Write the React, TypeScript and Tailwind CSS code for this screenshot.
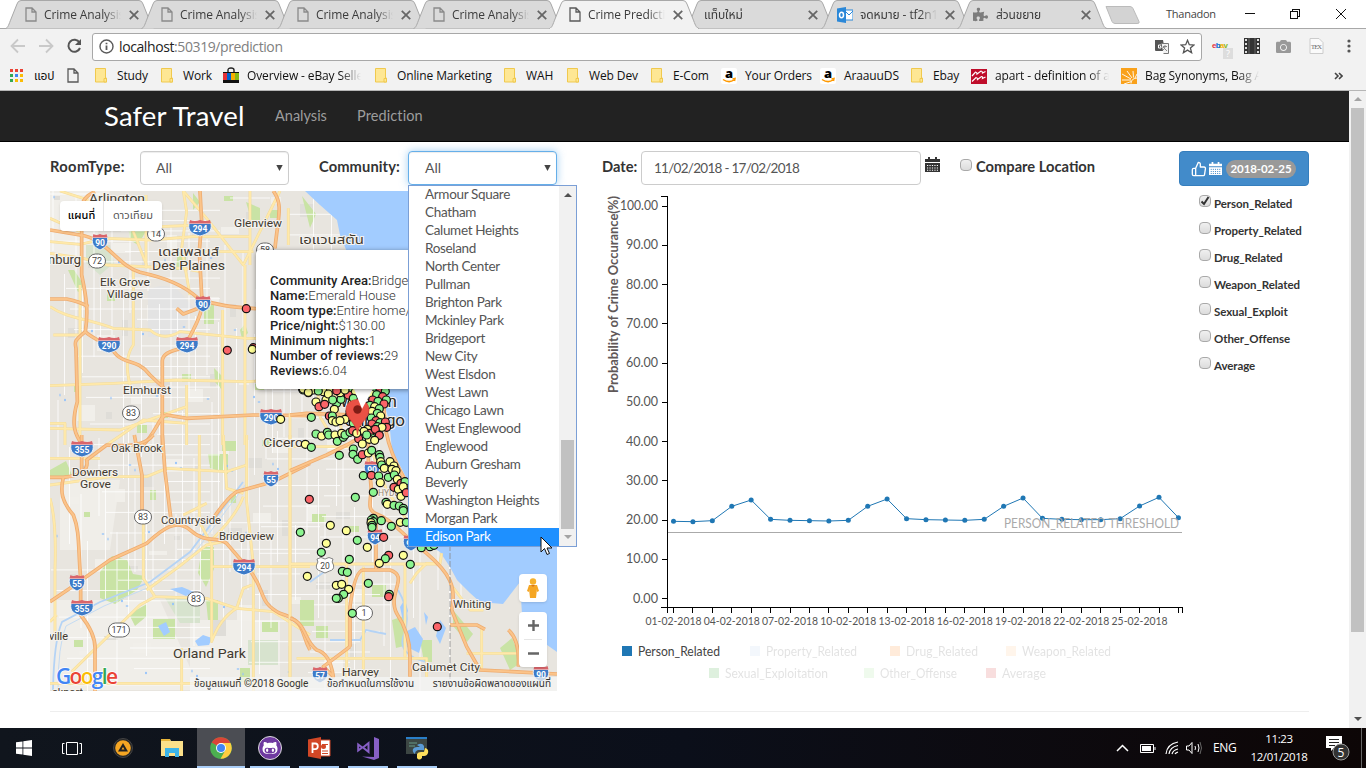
import React from "react";
import { FaPuzzlePiece, FaCamera, FaGithubAlt } from "react-icons/fa";
import { FiThumbsUp } from "react-icons/fi";

const UI = "font-['Open_Sans','Noto_Sans_Thai','Noto_Sans',sans-serif]";
const BODY = "font-['Lato','Open_Sans',sans-serif]";

/* ---------- small icons ---------- */
const PageIcon = ({ dim = false }: { dim?: boolean }) => (
  <svg width="12" height="15" viewBox="0 0 12 15" fill="none" stroke={dim ? "#8a8a8a" : "#5a5a5a"} strokeWidth="1.3">
    <path d="M1 1h6l4 4v9H1zM7 1v4h4" />
  </svg>
);
const Folder = () => (
  <svg width="13" height="15" viewBox="0 0 13 15">
    <path d="M.5.5h10v9.500h1v4H.5z" fill="#fee794" stroke="#f0c94e" />
    <path d="M9 14v-3.500h2.500V14z" fill="#fee794" stroke="#f0c94e" />
  </svg>
);
const Amazon = () => (
  <svg width="16" height="16" viewBox="0 0 16 16">
    <rect width="16" height="16" rx="2" fill="#fff" />
    <text x="8" y="10" textAnchor="middle" fontFamily="Open Sans" fontWeight="800" fontSize="13">a</text>
    <path d="M2 11.500q6 4 11 .5M11.500 11l2.500-.5-.5 2.500" fill="none" stroke="#ff9900" strokeWidth="1.500" />
  </svg>
);

/* ---------- browser tabs ---------- */
type TabInfo = { t: string; kind: string };
const tabs: TabInfo[] = [
  { t: "Crime Analysis", kind: "page" },
  { t: "Crime Analysis", kind: "page" },
  { t: "Crime Analysis", kind: "page" },
  { t: "Crime Analysis", kind: "page" },
  { t: "Crime Predictio", kind: "active" },
  { t: "แท็บใหม่", kind: "none" },
  { t: "จดหมาย - tf2n1", kind: "outlook" },
  { t: "ส่วนขยาย", kind: "puzzle" },
];
const Tab = ({ t, kind }: TabInfo) => {
  const active = kind === "active";
  return (
    <div className={active ? "relative z-10 h-[29px] w-[136px] shrink-0" : "relative h-[29px] w-[136px] shrink-0"}>
      <svg className="absolute left-0 top-0 overflow-visible" width="150" height="29" viewBox="0 0 150 29">
        <path d="M.5 28.500C3 28 4 24 6 19L12 4Q13 .5 16 .5H134Q137 .5 138 4L144 19C146 24 147 28 150 28.500" fill={active ? "#f2f2f2" : "#dadada"} stroke="#a8a8a8" />
        {active && <path d="M1 29H149" stroke="#f2f2f2" strokeWidth="2" />}
      </svg>
      <div className="relative flex h-full items-center pl-5">
        {kind !== "none" && (
          <span className="flex w-[19px] shrink-0">
            {(kind === "page" || active) && <PageIcon dim={!active} />}
            {kind === "puzzle" && <FaPuzzlePiece size={15} color="#7d7d7d" className="-ml-1 shrink-0" />}
            {kind === "outlook" && (
              <svg width="16" height="16" viewBox="0 0 16 16" className="-ml-1 shrink-0">
                <path d="M8 3h8v10H8z" fill="#fff" stroke="#2b88d8" />
                <path d="m8 4 4 4 4-4" fill="none" stroke="#2b88d8" />
                <path d="M0 1.500 9 0v16l-9-1.500z" fill="#2b88d8" />
                <ellipse cx="4.500" cy="8" rx="2" ry="2.700" fill="none" stroke="#fff" strokeWidth="1.500" />
              </svg>
            )}
          </span>
        )}
        <span className={(kind === "none" ? "-ml-[1px] w-[96px]" : "w-[77px]") + " overflow-hidden whitespace-nowrap text-[12px] leading-5 tracking-[-0.1px] text-[#3c3c3c] [mask-image:linear-gradient(to_right,black_78%,transparent)]"}>{t}</span>
        <svg className="ml-2 shrink-0" width="10" height="10" viewBox="0 0 9 9" stroke="#666" strokeWidth="1.600"><path d="m.7.7 7.600 7.600M8.300.7.700 8.300" /></svg>
      </div>
    </div>
  );
};

const EbayBag = () => (
  <svg width="16" height="16" viewBox="0 0 16 16" className="-mt-px">
    <path d="M5 5V3q0-2 3-2t3 2v2" fill="none" stroke="#222" strokeWidth="1.400" />
    <path d="M0 5h16v11H0z" fill="#111" />
    <path d="M0 6h4v7H0z" fill="#e53238" /><path d="M4 6h4v7H4z" fill="#0064d2" /><path d="M8 6h4v7H8z" fill="#f5af02" /><path d="M12 6h4v7h-4z" fill="#86b817" />
  </svg>
);
const AppsIcon = () => (
  <svg width="13" height="13" viewBox="0 0 13 13">
    {["#ea4335", "#ea4335", "#ea4335", "#34a853", "#4285f4", "#fbbc05", "#34a853", "#fbbc05", "#fbbc05"].map((c, i) => (
      <rect key={i} x={(i % 3) * 5} y={Math.floor(i / 3) * 5} width="3" height="3" fill={c} />
    ))}
  </svg>
);
const Macmillan = () => (
  <svg width="16" height="16" viewBox="0 0 16 16"><path d="M0 1h16v15H0z" fill="#bf0d2b" /><path d="M1 8 4.500 4q1.500 0 1.500 2L10 3q1.500 0 1.500 2l3-1.500M1 13.500 5 9.500q1.500 0 1.500 2l4-3q1.500 0 1 2l3-1.500" stroke="#fff" fill="none" strokeWidth="1.200" /></svg>
);
const Sunburst = () => (
  <svg width="16" height="16" viewBox="0 0 16 16"><path d="M0 0h16v16H0z" fill="#f9a11b" /><path d="M10 11 1 6M11 10 6 3M12.500 9.500 12 3M10 12H1M10.500 13.500 3 16M14 10l2-4M10 15.500q0-5 6-5.500" stroke="#fff" fill="none" strokeWidth=".9" /></svg>
);
const marks: { w: string; icon: React.ReactNode; g: string; t: string; fade?: boolean }[] = [
  { w: "w-[57px]", icon: <AppsIcon />, g: "w-6", t: "แอป" },
  { w: "w-7", icon: <PageIcon />, g: "w-5", t: "" },
  { w: "w-[66px]", icon: <Folder />, g: "w-[22px]", t: "Study" },
  { w: "w-[62px]", icon: <Folder />, g: "w-[22px]", t: "Work" },
  { w: "w-[152px]", icon: <EbayBag />, g: "w-6", t: "Overview - eBay Selle", fade: true },
  { w: "w-[129px]", icon: <Folder />, g: "w-[22px]", t: "Online Marketing" },
  { w: "w-[63px]", icon: <Folder />, g: "w-[22px]", t: "WAH" },
  { w: "w-[84px]", icon: <Folder />, g: "w-[22px]", t: "Web Dev" },
  { w: "w-[70px]", icon: <Folder />, g: "w-[22px]", t: "E-Com" },
  { w: "w-[99px]", icon: <Amazon />, g: "w-6", t: "Your Orders" },
  { w: "w-[91px]", icon: <Amazon />, g: "w-6", t: "AraauuDS" },
  { w: "w-[60px]", icon: <Folder />, g: "w-[22px]", t: "Ebay" },
  { w: "w-[150px]", icon: <Macmillan />, g: "w-6", t: "apart - definition of a", fade: true },
  { w: "w-[150px]", icon: <Sunburst />, g: "w-6", t: "Bag Synonyms, Bag A", fade: true },
];

const Chrome = () => (
  <header className={"h-[91px] bg-[#f2f2f2] " + UI}>
    <div className="flex h-[29px] border-b border-[#a8a8a8] bg-white pl-[5px]">
      {tabs.map((t, i) => <Tab key={i} {...t} />)}
      <svg className="ml-[12px] mt-[6px] shrink-0" width="36" height="19" viewBox="0 0 36 19"><path d="M1 .5h24q2 0 3 2l6 13q1 2-2 2H10q-2 0-3-2z" fill="#d3d3d3" stroke="#bbb" /></svg>
      <span className="ml-[25px] mt-[6px] w-[52px] text-[11px] leading-4 tracking-[-0.25px] text-[#444]">Thanadon</span>
      <svg className="ml-auto mr-[17px] mt-2" width="104" height="12" viewBox="0 0 104 12" fill="none" stroke="#111" shapeRendering="crispEdges">
        <path d="M0 5.500h10M45.500 3.500h7v7h-7zM47.500 3V1.500h7v7H53" /><path d="m91 1 10 10M101 1 91 11" shapeRendering="auto" />
      </svg>
    </div>
    <div className="flex h-8 items-center">
      <svg className="ml-[10px] mt-[2px] shrink-0" width="82" height="18" viewBox="10 38 82 18" fill="none" stroke="#c9c9c9" strokeWidth="1.800">
        <path d="M25 47H12M18 40.500 11.500 47l6.500 6.500M39 47h13M46 40.500l6.500 6.500-6.500 6.500" />
        <path d="M79.500 43.500A6 6 0 1 0 80 49" stroke="#555" strokeWidth="2" /><path d="M81 40v6h-6z" fill="#555" stroke="none" />
      </svg>
      <div className="mt-[3px] flex h-[28px] w-[1110px] shrink-0 items-center rounded-[3px] border border-[#a8a8a8] bg-white pl-[6px]">
        <svg width="15" height="15" viewBox="0 0 15 15" fill="none" stroke="#5a5a5a" strokeWidth="1.400"><circle cx="7.500" cy="7.500" r="6.500" /><path d="M7.500 6.500V11M7.500 3.700v1.600" strokeWidth="1.800" /></svg>
        <span className="ml-[5px] text-[14px] leading-5 tracking-[-0.4px] text-[#222]">localhost<span className="text-[#808080]">:50319/prediction</span></span>
        <svg className="ml-auto mr-[11px]" width="14" height="14" viewBox="0 0 14 14"><path d="M0 0h8l2 11H1Q0 11 0 10z" fill="#555" /><path d="M6.500 3.500h7v10h-5" fill="#f2f2f2" stroke="#777" /><path d="M8 6.500h4M10 5v1.500Q10 9 8 10m0-3 4 4" fill="none" stroke="#888" /><path d="M6 5H3.500v3h2.500V6.500H5" fill="none" stroke="#fff" /></svg>
        <svg className="mr-[6px]" width="15" height="15" viewBox="0 0 15 15" fill="none" stroke="#555" strokeWidth="1.300"><path d="m7.500 1.300 1.800 4.400 4.700.3-3.600 3 1.200 4.700-4.100-2.600-4.100 2.600 1.200-4.700-3.600-3 4.700-.3z" /></svg>
      </div>
      <div className="flex flex-1 items-center pl-[9px] pt-[2px]">
        <svg className="mt-2" width="24" height="20" viewBox="0 0 24 20"><text x="1" y="8" fontFamily="Liberation Sans" fontWeight="700" fontSize="8" textLength="16"><tspan fill="#e53238">e</tspan><tspan fill="#0064d2">b</tspan><tspan fill="#f5af02">a</tspan><tspan fill="#86b817">y</tspan></text><rect x="12" y="8" width="10" height="11" fill="#ddd" /><text x="15" y="17" fill="#fff" fontSize="9" fontFamily="Open Sans">?</text></svg>
        <svg className="ml-[9px]" width="16" height="16" viewBox="0 0 16 16"><path d="M0 0h16v16H0z" fill="#333" /><path d="M5 0v16M11 0v16" stroke="#666" /><path d="M2 1v14M14 1v14" stroke="#ddd" strokeWidth="2" strokeDasharray="2 2" /></svg>
        <FaCamera className="ml-4" size={15} color="#999" />
        <svg className="ml-[18px]" width="15" height="16" viewBox="0 0 15 16"><path d="M1 .5h9l4 4v11H1z" fill="#fafafa" stroke="#ccc" /><text x="2" y="11" fontSize="6.500" fontFamily="Liberation Serif" textLength="11" fill="#666">TEX</text></svg>
        <svg className="ml-[23px]" width="4" height="14" viewBox="0 0 4 14" fill="#555"><circle cx="2" cy="2" r="1.600" /><circle cx="2" cy="7" r="1.600" /><circle cx="2" cy="12" r="1.600" /></svg>
      </div>
    </div>
    <div className="flex h-[30px] items-center border-b border-[#b6b6b6] pl-[10px] text-[12px] tracking-[-0.12px] text-[#111]">
      {marks.map((m, i) => (
        <div key={i} className={"flex shrink-0 items-center " + m.w}>
          <span className={"shrink-0 " + m.g}>{m.icon}</span>
          <span className={m.fade ? "w-[114px] overflow-hidden whitespace-nowrap leading-5 [mask-image:linear-gradient(to_right,black_82%,transparent)]" : "whitespace-nowrap leading-5"}>{m.t}</span>
        </div>
      ))}
      <svg className="ml-[63px]" width="9" height="8" viewBox="0 0 9 8" fill="none" stroke="#444" strokeWidth="1.600"><path d="m1 1 3 3-3 3M5 1l3 3-3 3" /></svg>
    </div>
  </header>
);

/* ---------- map ---------- */
const hwA = [
  "M165 20C130 35 120 60 125 90V270C140 340 145 380 136 440C100 470 105 470 108 490L112 650C92 720 105 750 128 780",
  "M30 135L120 150C200 160 230 240 300 262C380 280 430 300 475 340C530 362 560 365 700 375",
  "M30 342H80Q120 350 145 365",
  "M135 440C170 470 200 470 230 510C260 540 290 520 330 570L378 615",
  "M480 18L485 110 478 200 485 330C495 370 470 420 430 490Q365 500 367 530V780",
  "M410 370L430 387 475 370", "M310 780C350 740 360 690 380 690L440 700 640 690 810 692",
  "M700 18C730 60 715 90 705 190",
];
const hwB = [
  "M30 127H70Q150 120 140 75L200 30Q310 40 340 0", "M70 127C60 170 65 200 100 240C120 290 114 340 122 430V540Q170 600 165 650V780",
  "M30 500L90 460 210 375 320 325C370 280 410 250 450 285C500 330 530 300 560 325L620 395C680 460 650 500 720 535C800 560 780 590 810 645",
  "M283 0L306 120V230M367 0L375 110 395 270", "M810 85L700 140 590 170Q560 190 520 250", "M125 0V110",
];
const hwC = [
  "M0 272L110 225 170 195 215 170M0 105L50 100 200 105", "M290 30C270 110 290 200 340 290L355 320",
  "M235 180V270C260 340 220 380 255 400C310 420 330 460 410 520C480 580 500 620 485 690L530 800 570 870 801 882",
  "M180 800V680Q195 570 220 570H300C360 590 290 640 320 700Q360 760 360 830V890", "M258 400V570", "M0 715C50 730 40 780 80 810Q120 820 130 890L100 860 180 800",
  "M480 735L560 735 585 748M655 750Q690 780 685 860",
];
const yeA = [
  "M30 170L120 178 200 160 330 165 460 155 630 155", "M30 205L130 220 200 240 430 250 480 260", "M60 18L160 50 260 110 360 125 480 120",
  "M30 365C80 400 140 400 220 430L330 435Q370 470 420 440L620 460H810", "M30 602L220 595 410 585 620 590 810 580", "M280 250V480Q250 520 270 600", "M318 30V250M260 90L320 240", "M30 100L120 140M40 450H120",
  "M30 730L240 735 440 665M200 780L310 705 440 715", "M548 375V780M615 240V780M430 18L440 80 425 190 450 330", "M430 18L500 100 610 240 720 18", "M440 600V780M75 780V715H30", "M745 70V180M480 200H640M630 18V240", "M120 300V780",
];
const yeB = [
  "M30 70H180M30 150L210 125 320 125 380 100 560 110 620 90", "M310 230V430L345 485 500 490 590 520 700 530 810 600", "M95 710L300 510 345 485 M320 465 410 400 500 330 550 320 M520 310Q590 240 610 185",
  "M30 190Q50 260 45 400V600M30 560L50 540", "M478 0V260L515 330V620Q540 550 590 520L610 460 635 450", "M620 0V200L640 390V780M515 395H810", "M750 0V780M30 745H810M425 640V780M550 0L560 160 610 175", "M430 240L500 205",
];
const yeC = [
  "M100 170L190 150 240 140M0 552H450L455 520M220 560V890M20 835H410V890M345 550V830", "M0 100V890M575 745V870M530 820H690M360 610L380 580 410 550 445 550M240 200L290 330 350 420M480 610L540 690H580",
  "M80 0L90 110 120 160M130 20L160 180M170 550V890M0 200H180",
];
const minor: string[] = [];
for (let i = 0; i < 44; i++) {
  const a = 53 + i * 9.5 + ((i * 7) % 5), b = 194 + i * 11.300 + ((i * 11) % 6);
  minor.push(`M${a} ${191 + ((i * 83) % 160)}v${60 + ((i * 61) % 150)}`, `M${a + 5} ${400 + ((i * 47) % 150)}v${60 + ((i * 37) % 130)}`);
  minor.push(`M${50 + ((i * 67) % 130)} ${b}h${50 + ((i * 53) % 110)}`, `M${230 + ((i * 59) % 120)} ${b + 4}h${40 + ((i * 41) % 90)}`);
}
const parks = [
  "M178 248h8v22h-10zM128 225l14-6 4 12-8 14-8-5zM204 302h10v22h-10zM214 368l8 8v14l-7-8z", "M100 572l12-16 15 4 6 14 12 2-8 14-22 14-15-6z",
  "M202 547h12v22l-8 18-8-14zM206 600h12v20h-10zM153 619h22v20h-22zM129 614l18-10v12l-12 10zM208 454h20v20l-18-6z", "M50 470l16-9 6 14-22 4zM262 622h16v10h-16zM300 600h14v26h-14zM240 668h10v14h-10z",
  "M302 196l14 18-6 14zM246 202l14 6v14h-8zM312 514h14v8h-14zM347 526h12v6h-12zM316 626h12v12h-12zM453 610l20 24-6 8-14-16z", "M68 270h6l12 18-8 4zM150 490h6v10h-6zM182 374h9v8h-9zM392 620l12-4v30l-8 2zM500 648l12-10 10 24-12 8z",
  "M240 330l5-6 3 9-6 6zM193 193l7 9-7 8zM222 441h14v10h-14zM372 585h14v12h-14zM420 640h12v22h-8z",
  "M107 292h8v9h-8zM137 425h10v8h-10zM74 384h6v8h-6zM255 384h9v6h-9zM262 440h12v6h-12zM84 512h6v5h-6zM74 640h9v7h-9zM270 210h8v8h-8zM224 196h9v5h-9zM229 495h7v8h-7zM90 214h9v6h-9zM160 412h8v6h-8z",
];
const Roads = ({ y, h }: { y: string[]; h: string[] }) => (
  <g fill="none" strokeLinejoin="round">
    {y.map((d, i) => <path key={i} d={d} stroke="#f3dc9c" strokeWidth="8.500" />)}
    {y.map((d, i) => <path key={i} d={d} stroke="#ffe9aa" strokeWidth="5.500" />)}
    {h.map((d, i) => <path key={i} d={d} stroke="#eeac70" strokeWidth="11" />)}
    {h.map((d, i) => <path key={i} d={d} stroke="#fbc48a" strokeWidth="6" />)}
  </g>
);
const Shield = ({ x, y, t }: { x: number; y: number; t: string }) => {
  const w = t.length > 2 ? 11 : 7.5;
  return (
    <g transform={`translate(${x} ${y})`}>
      <path d={`M${-w} -4.500H${w}C${w + 1.500} 4 ${w - 4} 6 0 8C${4 - w} 6 ${-w - 1.500} 4 ${-w} -4.500`} fill="#3d7bc8" stroke="#fff" strokeWidth=".8" />
      <path d={`M${1 - w} -8L${-w} -4.500H${w}L${w - 1} -8Q${w / 2} -6 0 -8Q${-w / 2} -6 ${1 - w} -8`} fill="#d9656b" />
      <text y="4" textAnchor="middle" fontSize="8.500" fontWeight="700" fill="#fff">{t}</text>
    </g>
  );
};
const Oval = ({ x, y, t }: { x: number; y: number; t: string }) => (
  <g transform={`translate(${x} ${y})`}>
    <rect x={t.length > 2 ? -10.500 : -8.500} y="-7" width={t.length > 2 ? 21 : 17} height="14" rx="7" fill="#fff" stroke="#666" />
    <text y="3.200" textAnchor="middle" fontSize="9" fill="#444">{t}</text>
  </g>
);
const shields: [number, number, string][] = [[200, 228, "294"], [100, 242, "90"], [203, 304, "90"], [109, 345, "290"], [187, 345, "294"], [271, 417, "290"], [82, 449, "355"], [271, 479, "55"], [77, 583, "55"], [82, 608, "355"], [244, 567, "294"], [372, 469, "90"], [375, 537, "94"], [411, 543, "90"], [320, 675, "57"], [541, 674, "90"]];
const ovals: [number, number, string][] = [[156, 234, "14"], [97, 261, "72"], [265, 250, "58"], [131, 413, "83"], [143, 517, "83"], [196, 599, "83"], [119, 630, "171"], [364, 613, "1"]];
/* label, left, baseline, length, size */
const places: [string, number, number, number, number][] = [
  ["Arlington", 89, 203, 56, 12.5], ["Glenview", 234, 227, 48, 11], ["เดสเพลนส์", 158, 256, 61, 13], ["Des Plaines", 152, 270, 73, 13], ["nburg", 48, 264, 33, 12.5],
  ["Elk Grove", 100, 286, 50, 11], ["Village", 107, 298, 36, 11], ["เอแวนสตัน", 299, 244, 65, 13], ["Elmhurst", 123, 394, 48, 11], ["Oak Brook", 111, 452, 51, 11], ["Cicero", 263, 447, 40, 12.500],
  ["Downers", 72, 476, 46, 11], ["Grove", 80, 488, 31, 11], ["Countryside", 161, 524, 60, 11], ["Bridgeview", 219, 540, 55, 11], ["ville", 49, 640, 19, 11], ["Orland Park", 173, 658, 73, 13.500], ["ckport", 52, 696, 31, 11],
  ["Whiting", 453, 608, 38, 11], ["Calumet City", 412, 671, 68, 11.500], ["Harvey", 342, 676, 37, 11],
];
const fills: Record<string, string> = { G: "#8cf590", Y: "#ffff96", R: "#fb6468" };
const dots = "40,30G 55,38Y 78,66Y 87,80R 104,73R 64,112G 100,35Y 115,42Y 128,60G 118,108R 133,88Y 127,108G 127,122Y 138,126Y 153,58G 165,118Y 150,122Y 175,45R 150,38Y 70,30Y 85,33G 140,32R 165,30Y 190,55G 180,95R 78,162G 95,168Y 112,157G 116,165G 135,165Y 142,184G 160,172G 155,160Y 165,165G 180,157G 188,152R 200,160Y 46,193Y 64,202G 148,226G 190,207G 189,223G 203,238G 217,192Y 217,224R 235,219Y 245,211G 268,224G 270,232G 272,245Y 275,255G 283,265Y 220,287G 244,286R 266,288G 271,308Y 295,292G 300,245Y 312,258Y 306,268Y 318,272Y 313,285G 322,298Y 333,310R 312,322R 345,305G 325,328Y 340,320Y 333,349Y 349,338R 250,337G 196,352G 58,358R 288,367G 292,373Y 312,376G 328,378G 340,385G 340,392G 31,457G 121,436Y 169,452Y 109,490Y 94,517G 202,481G 232,502Y 178,538G 250,415G 244,420G 250,425G 243,428Y 246,436G 246,442G 274,422G 304,439G 331,427Y 349,427G 281,472R 296,526R 286,536G 268,550Y 340,526Y 361,553G 394,503G 420,500G 432,496G 52,589Y 157,574G 172,577G 235,610G 139,616Y 155,613Y 176,628Y 161,643G 145,655G 139,655G 298,643G 296,650R 187,700G 442,740R".split(" ");
const cluster = "38,28G 58,27Y 80,24R 98,26G 120,27Y 140,24G 160,36Y 182,28G 196,36Y 108,60Y 140,70G 186,70Y 176,110R 190,130G 205,150Y 250,28G 270,26R 286,34G 243,42Y 260,44G 278,50R 289,60G 248,60R 264,64G 240,76G 254,80Y 282,72R 268,86G 246,94Y 262,100G 272,108Y 244,114G 258,122R 270,128G 286,126R 246,132R 290,142R 262,140G 276,142Y 250,150G 232,148Y 238,160R 256,148R 268,166R 245,174G 238,178Y 254,181Y 222,154Y 230,165G 206,176R".split(" ");
const Dots = ({ list }: { list: string[] }) => (
  <g stroke="#111" strokeWidth="3.600">
    {list.map((s, i) => {
      const [x, y] = s.slice(0, -1).split(",").map(Number);
      return <circle key={i} cx={x} cy={y} r="12" fill={fills[s.slice(-1)]} />;
    })}
  </g>
);

const CityMap = () => (
  <svg className="block" width="507" height="500" viewBox="50 191 507 500" fontFamily="Roboto, 'Noto Sans Thai', sans-serif">
    <rect x="50" y="191" width="507" height="500" fill="#e8e5df" />
    <path d="M50 191h60l-20 70h-40zM50 600h110l40 90H50zM190 620h90v70h-90zM60 480h60l-10 70H60z" fill="#f0eee9" />
    {Array.from({ length: 70 }, (_, i) => <rect key={i} x={54 + ((i * 97) % 300)} y={196 + ((i * 131) % 470)} width={6 + (i % 4) * 4} height={4 + (i % 5) * 3} fill={i % 2 ? "#f1efea" : "#dfddd8"} />)}
    <path d="M148 290q15-8 30 0l16 18-14 28-32 1z" fill="#e3e3e3" />
    <path d="M86 245h24l4 18-14 12-14-12zM165 598h35v25h-20zM248 640h30v25h-30z" fill="#d7e3ce" />
    {parks.map((d, i) => <path key={i} d={d} fill="#c9e3a5" />)}
    <path d={minor.join("")} stroke="#fff" strokeWidth="1" opacity=".8" fill="none" />
    <path d="M305 191L320 205 337 220 340 235 347 252 380 390 389 420 392 450 410 485 432 547 440 552 450 567 457 580 470 593 480 602 503 604 520 582 522 614 540 640 557 652V191z" fill="#a2ccff" />
    <path d="M170 589l12-2 12 5-8 4zM195 641l8-6 9 3-3 7-11 1zM158 626l8-4 4 10-6 4zM400 607l5-8 3 12-5 10zM405 632l10-5 8 12-4 14-12-6zM440 620l6 8-6 16-4-8zM424 612l4 5-2 8z" fill="#a2ccff" />
    <path d="M243 482L190 552 150 582 100 602 62 622Q54 640 53 690M398 590q14 24 6 44t22 28M330 640h30l6-10 20 4M310 582l14-10" fill="none" stroke="#b4d3f5" strokeWidth="1.800" />
    <path d="M246 484L193 555 152 586 104 606 66 626Q58 645 58 690" fill="none" stroke="#c5dcf3" />
    {Array.from({ length: 60 }, (_, i) => <ellipse key={i} cx={54 + ((i * 89) % 240)} cy={197 + ((i * 137) % 480)} rx={0.6 + (i % 3) * 0.4} ry={1.6 - (i % 3) * 0.4} fill="#92c2fb" />)}
    <g transform="translate(40 185) scale(.3333)"><Roads y={yeA} h={hwA} /></g>
    <g transform="translate(40 435) scale(.3333)"><Roads y={yeB} h={hwB} /></g>
    <g transform="translate(290 380) scale(.3333)"><Roads y={yeC} h={hwC} /></g>
    <path d="M450 545V690" stroke="#888" strokeDasharray="6 2" strokeWidth=".8" />
    {shields.map(([x, y, t]) => <Shield key={x + "," + y} x={x} y={y} t={t} />)}
    {ovals.map(([x, y, t]) => <Oval key={x + "," + y} x={x} y={y} t={t} />)}
    <path d="M317 559l4-1.500 4 1.500 4-1.500 4 1.500q-2 3 .5 6 1 5-4 6l-4.500 2-4.500-2q-5-1-4-6 2.500-3 .5-6" fill="#fff" stroke="#777" strokeWidth=".9" />
    <text x="325" y="568.500" textAnchor="middle" fontSize="8.500" fill="#444">20</text>
    <g fill="#41392f" stroke="#f4f2ee" strokeWidth="2" paintOrder="stroke">
      {places.map(([t, x, y, l, s]) => <text key={t} x={x} y={y} fontSize={s} textLength={l} lengthAdjust="spacingAndGlyphs">{t}</text>)}
      <text x="302" y="260" fontSize="12.500">Evanston</text>
      <text x="340" y="407" fontSize="17" textLength="57" fill="#2b2b2b">Western</text>
      <text x="344" y="426" fontSize="17" textLength="61" fill="#2b2b2b">Chicago</text>
      <text x="378" y="496" fontSize="8.500" fill="#9a8878">HYDE PARK</text>
    </g>
    <g transform="translate(290 380) scale(.3333)">
      <Dots list={cluster} /><Dots list={dots} />
    </g>
    <g transform="translate(40 185) scale(.3333)">
      <Dots list={["619,371R", "562,496R", "640,488R", "637,493Y", "722,703Y", "790,612Y", "805,622Y"]} />
    </g>
    <path d="M357.500 435C357 423 346 419 346 410C346 396 369 396 369 410C369 419 358 423 357.500 435" fill="#ea5145" stroke="#c93c33" strokeWidth=".7" />
    <path d="M354 389h19l-11 20z" fill="#fff" />
    <circle cx="357.500" cy="409.500" r="4.200" fill="#7f1d16" />
    <g fontFamily="'Open Sans'" fontWeight="600" fontSize="21" stroke="#fff" strokeWidth="1.500" paintOrder="stroke">
      <text x="56" y="684" textLength="62"><tspan fill="#4285f4">G</tspan><tspan fill="#ea4335">o</tspan><tspan fill="#fbbc05">o</tspan><tspan fill="#4285f4">g</tspan><tspan fill="#34a853">l</tspan><tspan fill="#ea4335">e</tspan></text>
    </g>
  </svg>
);

const info: [string, string][] = [["Community Area:", "Bridgeport"], ["Name:", "Emerald House"], ["Room type:", "Entire home/apt"], ["Price/night:", "$130.00"], ["Minimum nights:", "1"], ["Number of reviews:", "29"], ["Reviews:", "6.04"]];
const THAI = "font-['Roboto','Noto_Sans_Thai',sans-serif]";
const MapPanel = () => (
  <section className={"relative h-[500px] w-[507px] shrink-0 overflow-hidden " + THAI}>
    <CityMap />
    <div className="absolute left-[10px] top-[10px] flex h-[30px] items-center rounded-sm bg-white text-[11px] shadow">
      <span className="w-[44px] border-r border-[#e6e6e6] text-center font-medium leading-[30px] text-black">แผนที่</span>
      <span className="w-[58px] text-center leading-[30px] text-[#565656]">ดาวเทียม</span>
    </div>
    <div className="absolute left-[206px] top-[59px] h-[139px] w-[215px] whitespace-nowrap rounded-sm bg-white pl-[14px] pt-[23px] text-[13px] font-light leading-[15px] tracking-[0.05px] text-[#333] shadow-[0_1px_5px_rgba(0,0,0,.45)]">
      {info.map(([k, v]) => <p key={k}><b className="font-medium text-[#222]">{k}</b>{v}</p>)}
    </div>
    <div className="absolute left-[469px] top-[383px] flex h-[28px] w-[28px] items-center justify-center rounded-sm bg-white shadow">
      <svg width="14" height="21" viewBox="0 0 14 21"><circle cx="7" cy="3.500" r="3.200" fill="#f5b12c" /><path d="M3 7h8l2 6-2 1v-3l-1 9H4L3 11v3l-2-1z" fill="#f5a623" /><path d="m5 7 2 2 2-2z" fill="#d8761c" /></svg>
    </div>
    <div className="absolute left-[469px] top-[421px] flex h-[55px] w-[28px] flex-col items-center rounded-sm bg-white shadow">
      <svg width="28" height="55" viewBox="0 0 28 55"><path d="M9 13.500h11M14.500 8v11M9 41.500h11" stroke="#666" strokeWidth="2.400" /><path d="M5 27.500h18" stroke="#e6e6e6" /></svg>
    </div>
    <div className="absolute bottom-0 right-0 flex h-[14px] w-[367px] items-center justify-between whitespace-nowrap bg-[#f5f5f5]/75 pl-1 pr-[6px] text-[10px] leading-[14px] text-[#333]">
      <span>ข้อมูลแผนที่ ©2018 Google</span><span>ข้อกำหนดในการใช้งาน</span><span>รายงานข้อผิดพลาดของแผนที่</span>
    </div>
  </section>
);

/* ---------- chart ---------- */
const ys = [154, 155, 152, 109, 90, 148, 151, 152, 153, 151, 109, 87, 146, 149, 150, 151, 148, 109, 84, 145, 148, 149, 149, 146, 108, 82, 143].map((v) => 470 + v / 3);
const px = (i: number) => 673.5 + i * 19.42;
const legend: [string, number, number, string, number, boolean][] = [
  ["Person_Related", 622, 646, "#1f77b4", 82, true], ["Property_Related", 750, 646, "#aec7e8", 91, false], ["Drug_Related", 890, 646, "#ff7f0e", 72, false], ["Weapon_Related", 1006, 646, "#ffbb78", 89, false],
  ["Sexual_Exploitation", 709, 668, "#2ca02c", 103, false], ["Other_Offense", 864, 668, "#98df8a", 77, false], ["Average", 986, 668, "#d62728", 44, false],
];
const Chart = () => (
  <svg className="ml-[45px] shrink-0" width="588" height="499" viewBox="602 191 588 499" fontFamily="Lato, 'Open Sans', sans-serif" fill="#555">
    <text transform="translate(617.5 393) rotate(-90)" fontSize="12.500" fontWeight="700" textLength="197" lengthAdjust="spacingAndGlyphs" fill="#605858">Probability of Crime Occurance(%)</text>
    <g shapeRendering="crispEdges" stroke="#000" fill="none">
      <path d="M661 196.500h6.500V607.500H661M667.500 613V607.500H1182.500V613" />
      {ys.map((_, i) => <path key={i} d={`M${Math.floor(px(i)) + 0.5} 607.500v5.500`} />)}
      {ys.slice(0, 11).map((_, i) => <path key={i} d={`M661.500 ${Math.round(598 - i * 39.25) + 0.5}h6`} />)}
    </g>
    {ys.slice(0, 11).map((_, i) => <text key={i} x="658" y={602.5 - i * 39.25} textAnchor="end" fontSize="13.500" textLength={i === 10 ? 38 : i === 0 ? 25 : 32} lengthAdjust="spacingAndGlyphs">{(i * 10).toFixed(2)}</text>)}
    {["01", "04", "07", "10", "13", "16", "19", "22", "25"].map((d, i) => <text key={d} x={px(i * 3)} y="625" textAnchor="middle" fontSize="11" textLength="56" lengthAdjust="spacingAndGlyphs">{d}-02-2018</text>)}
    <path d="M668 532.500H1182" stroke="#aaa" shapeRendering="crispEdges" />
    <polyline points={ys.map((y, i) => `${px(i)},${y}`).join(" ")} fill="none" stroke="#1f77b4" />
    {ys.map((y, i) => <circle key={i} cx={px(i)} cy={y} r="2.500" fill="#1f77b4" />)}
    <text x="1179" y="528" textAnchor="end" fontSize="12.500" fill="#aaa" textLength="175" lengthAdjust="spacingAndGlyphs">PERSON_RELATED THRESHOLD</text>
    {legend.map(([t, x, y, c, l, on]) => (
      <g key={t} opacity={on ? 1 : 0.15}>
        <rect x={x} y={y} width="10" height="10" fill={c} />
        <text x={x + 16} y={y + 10} fontSize="12.500" textLength={l} lengthAdjust="spacingAndGlyphs" fill="#444">{t}</text>
      </g>
    ))}
  </svg>
);

/* ---------- page ---------- */
const Box = ({ on = false }: { on?: boolean }) => (
  <span className="flex h-3 w-3 shrink-0 items-center justify-center rounded-sm border border-[#a9a9a9] bg-gradient-to-b from-[#f0f0f0] to-[#dcdcdc]">
    {on && <svg width="10" height="10" viewBox="0 0 10 10"><path d="m1.500 5.500 2.500 2.500L8.500 1" fill="none" stroke="#333" strokeWidth="2" /></svg>}
  </span>
);
const SelectBox = ({ focus = false }: { focus?: boolean }) => (
  <div className={"flex h-[34px] w-[149px] shrink-0 items-center justify-between rounded border bg-white pl-[15px] pr-[5px] text-[14px] leading-5 text-[#555] " + (focus ? "border-[#66afe9] shadow-[inset_0_1px_1px_rgba(0,0,0,.075),0_0_8px_rgba(102,175,233,.6)]" : "border-[#ccc] shadow-[inset_0_1px_1px_rgba(0,0,0,.075)]")}>
    <span className={focus ? "pl-px" : ""}>All</span>
    <svg width="7" height="6" viewBox="0 0 7 6"><path d="M.3 0h6.400L3.500 6z" fill="#444" /></svg>
  </div>
);
const CalIcon = ({ c, bg, s }: { c: string; bg: string; s: number }) => (
  <svg className="shrink-0" width={s} height={s} viewBox="0 0 15 15"><path d="M0 2h3V0h2v2h5V0h2v2h3v3H0zM0 6h15v9H0z" fill={c} /><path d="M2 8.500h11M2 11h11M2 13.300h11" stroke={bg} strokeWidth="1.100" strokeDasharray="1.200 1.250" /></svg>
);
const areas = ["Armour Square", "Chatham", "Calumet Heights", "Roseland", "North Center", "Pullman", "Brighton Park", "Mckinley Park", "Bridgeport", "New City", "West Elsdon", "West Lawn", "Chicago Lawn", "West Englewood", "Englewood", "Auburn Gresham", "Beverly", "Washington Heights", "Morgan Park", "Edison Park"];
const crimes = ["Person_Related", "Property_Related", "Drug_Related", "Weapon_Related", "Sexual_Exploit", "Other_Offense", "Average"];

const Dropdown = () => (
  <div className="absolute left-0 top-[34px] z-20 flex h-[362px] w-[169px] border border-[#7b9fd6] bg-white">
    <ul className="w-[150px] text-[13.5px] tracking-[-0.33px] text-[#555]">
      {areas.map((a, i) => <li key={a} className={i === 19 ? "h-[18px] bg-[#1e90ff] pl-4 leading-4 text-white" : "h-[18px] pl-4 leading-4"}>{a}</li>)}
    </ul>
    <div className="flex w-[17px] flex-col items-center bg-[#f1f1f1]">
      <svg width="8" height="4" viewBox="0 0 8 4" className="mt-[7px]"><path d="M0 4 4 0l4 4z" fill="#505050" /></svg>
      <div className="mt-[243px] h-[89px] w-[13px] bg-[#c1c1c1]" />
      <svg width="8" height="4" viewBox="0 0 8 4" className="mt-[6px]"><path d="M0 0h8L4 4z" fill="#a3a3a3" /></svg>
    </div>
    <svg className="absolute left-[131px] top-[350px]" width="13" height="20" viewBox="0 0 13 20"><path d="M1 1v15l3.500-3.500L7 18.500l2.500-1L7 12h5z" fill="#fff" stroke="#111" /></svg>
  </div>
);

const Page = () => (
  <div className={"flex h-[637px] bg-white " + BODY}>
    <div className="w-[1349px]">
      <nav className="flex h-[51px] items-center border-b border-black bg-[#222] pl-[104px]">
        <span className="w-[171px] text-[27.5px] leading-8 tracking-[0.15px] text-white">Safer Travel</span>
        <span className="w-[82px] text-[14.5px] text-[#9d9d9d]">Analysis</span>
        <span className="text-[14.5px] tracking-[0.1px] text-[#9d9d9d]">Prediction</span>
      </nav>
      <main className="px-[50px] pr-10 pt-[9px]">
        <div className="flex h-10 items-start text-[14.7px] text-[#333]">
          <b className="w-[90px] leading-[30px] tracking-[0.35px]">RoomType:</b>
          <SelectBox />
          <b className="ml-[30px] w-[89px] leading-[30px] tracking-[0.1px]">Community:</b>
          <div className="relative"><SelectBox focus /><Dropdown /></div>
          <b className="ml-[45px] w-[39px] leading-[31px]">Date:</b>
          <div className="flex h-[34px] w-[280px] items-center rounded border border-[#ccc] pl-3 text-[13.5px] tracking-[-0.72px] text-[#555]">11/02/2018 - 17/02/2018</div>
          <span className="ml-1 mt-[6px]"><CalIcon c="#333" bg="#fff" s={15} /></span>
          <span className="ml-5 mt-2"><Box /></span>
          <b className="ml-1 leading-[31px]">Compare Location</b>
          <button className="ml-auto flex h-[35px] w-[130px] items-center rounded border border-[#357ebd] bg-[#428bca] pl-[11px]">
            <FiThumbsUp size={16} color="#fff" className="shrink-0" />
            <span className="ml-[2px]"><CalIcon c="#fff" bg="#428bca" s={13} /></span>
            <span className="ml-[4px] flex h-[18px] w-[70px] items-center justify-center rounded-[10px] bg-[#999] text-[11.5px] font-bold tracking-[-0.1px] text-white">2018-02-25</span>
          </button>
        </div>
        <div className="flex">
          <MapPanel />
          <Chart />
          <ul className="ml-[9px] pt-1 text-[11.5px] tracking-[-0.08px] text-[#333]">
            {crimes.map((c, i) => (
              <li key={c} className="flex h-[27px] items-start font-bold"><Box on={i === 0} /><span className="ml-[3px] mt-[1px] leading-4">{c}</span></li>
            ))}
          </ul>
        </div>
        <hr className="mt-5 border-[#eee]" />
      </main>
    </div>
    <div className="flex w-[17px] flex-col items-center bg-[#f1f1f1]">
      <svg width="8" height="4" viewBox="0 0 8 4" className="mt-[6px]"><path d="M0 4 4 0l4 4z" fill="#a3a3a3" /></svg>
      <div className="mt-[7px] h-[524px] w-[13px] bg-[#c1c1c1]" />
      <svg width="8" height="4" viewBox="0 0 8 4" className="mt-auto mb-[7px]"><path d="M0 0h8L4 4z" fill="#505050" /></svg>
    </div>
  </div>
);

/* ---------- taskbar ---------- */
const Task = ({ children, w, on, active }: { children: React.ReactNode; w: string; on?: boolean; active?: boolean }) => (
  <div className={"relative flex h-10 shrink-0 items-center justify-center " + w + (active ? " bg-[#4b4d53]" : "")}>
    {children}
    {on && <span className={active ? "absolute bottom-0 h-[2px] w-12 bg-[#a9cdf7]" : "absolute bottom-0 h-[2px] w-10 bg-[#a9cdf7]"} />}
  </div>
);
const Taskbar = () => (
  <footer className={"flex h-10 bg-gradient-to-r from-[#10151d] via-[#0b0f1a] to-[#0d0606] text-white " + UI}>
    <Task w="w-12"><svg width="16" height="16" viewBox="0 0 16 16" fill="#fff"><path d="M0 2.300 6.500 1.400v6.200H0zM7.300 1.300 16 0v7.600H7.300zM0 8.400h6.500v6.200L0 13.700zM7.300 8.400H16V16l-8.700-1.300z" /></svg></Task>
    <Task w="w-12"><svg width="20" height="15" viewBox="0 0 20 15" fill="none" stroke="#fff"><path d="M4.500 1.500h11v12h-11zM2.500 2.500h-2v10h2M17.500 2.500h2v10h-2" /></svg></Task>
    <Task w="w-[54px]"><svg width="20" height="20" viewBox="0 0 20 20"><circle cx="10" cy="10" r="9.500" fill="#262626" stroke="#444" /><circle cx="10" cy="10" r="7.800" fill="#f5a623" /><path d="m10 5 5 8.500H5z" fill="#222" /><path d="m10 9 1.500 2.500h-3z" fill="#f5a623" /></svg></Task>
    <Task w="w-[44px]"><svg className="mb-px" width="22" height="20" viewBox="0 0 22 20"><path d="M0 1h9l1 2h12v15H0z" fill="#fbe08a" /><path d="M0 1h9v2H0z" fill="#e8b53a" /><path d="M4 10h14v9h-4v-4H8v4H4z" fill="#3cb4e8" /></svg></Task>
    <span className="w-[3px]" />
    <Task w="w-12" on active>
      <svg width="22" height="22" viewBox="0 0 22 22"><circle cx="11" cy="11" r="10.800" fill="#4caf50" /><path d="M11 11 1.700 5.500A10.800 10.800 0 0 1 20.500 6H11z" fill="#db4437" /><path d="M11 6h9.500A10.800 10.800 0 0 1 10.500 21.800L15.500 13z" fill="#ffcd40" /><circle cx="11" cy="11" r="5" fill="#fff" /><circle cx="11" cy="11" r="4" fill="#4285f4" /></svg>
    </Task>
    <Task w="w-[50px]" on><span className="flex h-6 w-6 items-center justify-center rounded-full border border-[#ddd] bg-[#6f3aa0]"><FaGithubAlt size={16} /></span></Task>
    <Task w="w-[48px]" on><svg width="23" height="22" viewBox="0 0 23 22"><path d="M10 3h12v16H10z" fill="#fff" stroke="#d24726" /><path d="M14 7.500h6M14 14h6M14 16.500h6" stroke="#d24726" /><circle cx="15.500" cy="9.500" r="2.500" fill="#d24726" /><path d="M0 2.500 13 0v22L0 19.500z" fill="#d24726" /><path d="M4.500 16V6.500h2.800q2.500 0 2.500 2.800t-2.500 2.800H4.500" fill="none" stroke="#fff" strokeWidth="1.800" /></svg></Task>
    <Task w="w-[49px]" on><svg width="24" height="23" viewBox="0 0 24 23"><path d="M18 0 23 2v19l-5 2-12-3.500 12 .5z" fill="#865fc5" /><path d="M2.200 7.500v6l4-3zM7 10.500l5.500-4.500v9z" fill="none" stroke="#865fc5" strokeWidth="2" /></svg></Task>
    <Task w="w-[50px]" on><svg width="23" height="23" viewBox="0 0 23 23"><path d="M0 0h21v17H0z" fill="#3c4643" /><path d="M0 0h21v2H0z" fill="#2a7fc9" /><path d="M3 6h8M3 9h6" stroke="#698" /><path d="M11 8q5-3 7 1v4h-6q-3 1-3 4-3-2-2-5 1-2 4-2h3z" fill="#5b9bd5" /><path d="M19 11q4 1 3 5-1 3-4 3h-2v2q-3 3-5 0v-4q1-2 4-2h3z" fill="#ffe05c" /></svg></Task>
    <div className="ml-auto flex items-center">
      <svg className="mr-[3px]" width="94" height="16" viewBox="0 0 94 16" fill="none" stroke="#fff">
        <path d="m1 11 5.500-5.500L12 11" strokeWidth="1.500" /><path d="M24.500 4.500h13v8h-13zM39 7v3" /><path d="M26 6h9v5h-9z" fill="#fff" stroke="none" />
        <path d="M50 14q1-10 12-12M53 14q1-7 9-8.500M56 14q1-4 6-5M59 14q.5-1 3-2" strokeWidth="1.200" /><path d="M70.500 6h2.500l3-3.500v11l-3-3.500h-2.500zM79 6q1 2 0 4M82 4q2 4 0 8" /><path d="M84 2q3 6 0 12" stroke="#666" />
      </svg>
      <span className="w-[36px] text-[12px] tracking-[-0.3px]">ENG</span>
      <div className="w-[60px] text-center text-[11.5px] leading-[18px] tracking-[-0.4px]"><p>11:23</p><p>12/01/2018</p></div>
      <svg className="ml-[16px]" width="28" height="26" viewBox="0 0 28 26"><path d="M1 1h16v12H9l-3 3v-3H1z" fill="#fff" /><path d="M4 4.500h10M4 7.500h10M4 10.500h6" stroke="#222" /><circle cx="16" cy="17" r="8" fill="#333" stroke="#999" /><text x="16" y="21.500" textAnchor="middle" fontSize="12" fill="#fff" stroke="none">5</text></svg>
      <span className="ml-[8px] h-10 w-[5px] border-l border-[#666]" />
    </div>
  </footer>
);

export default function App() {
  return (
    <div className="h-[768px] w-[1366px] overflow-hidden bg-white">
      <Chrome />
      <Page />
      <Taskbar />
    </div>
  );
}
